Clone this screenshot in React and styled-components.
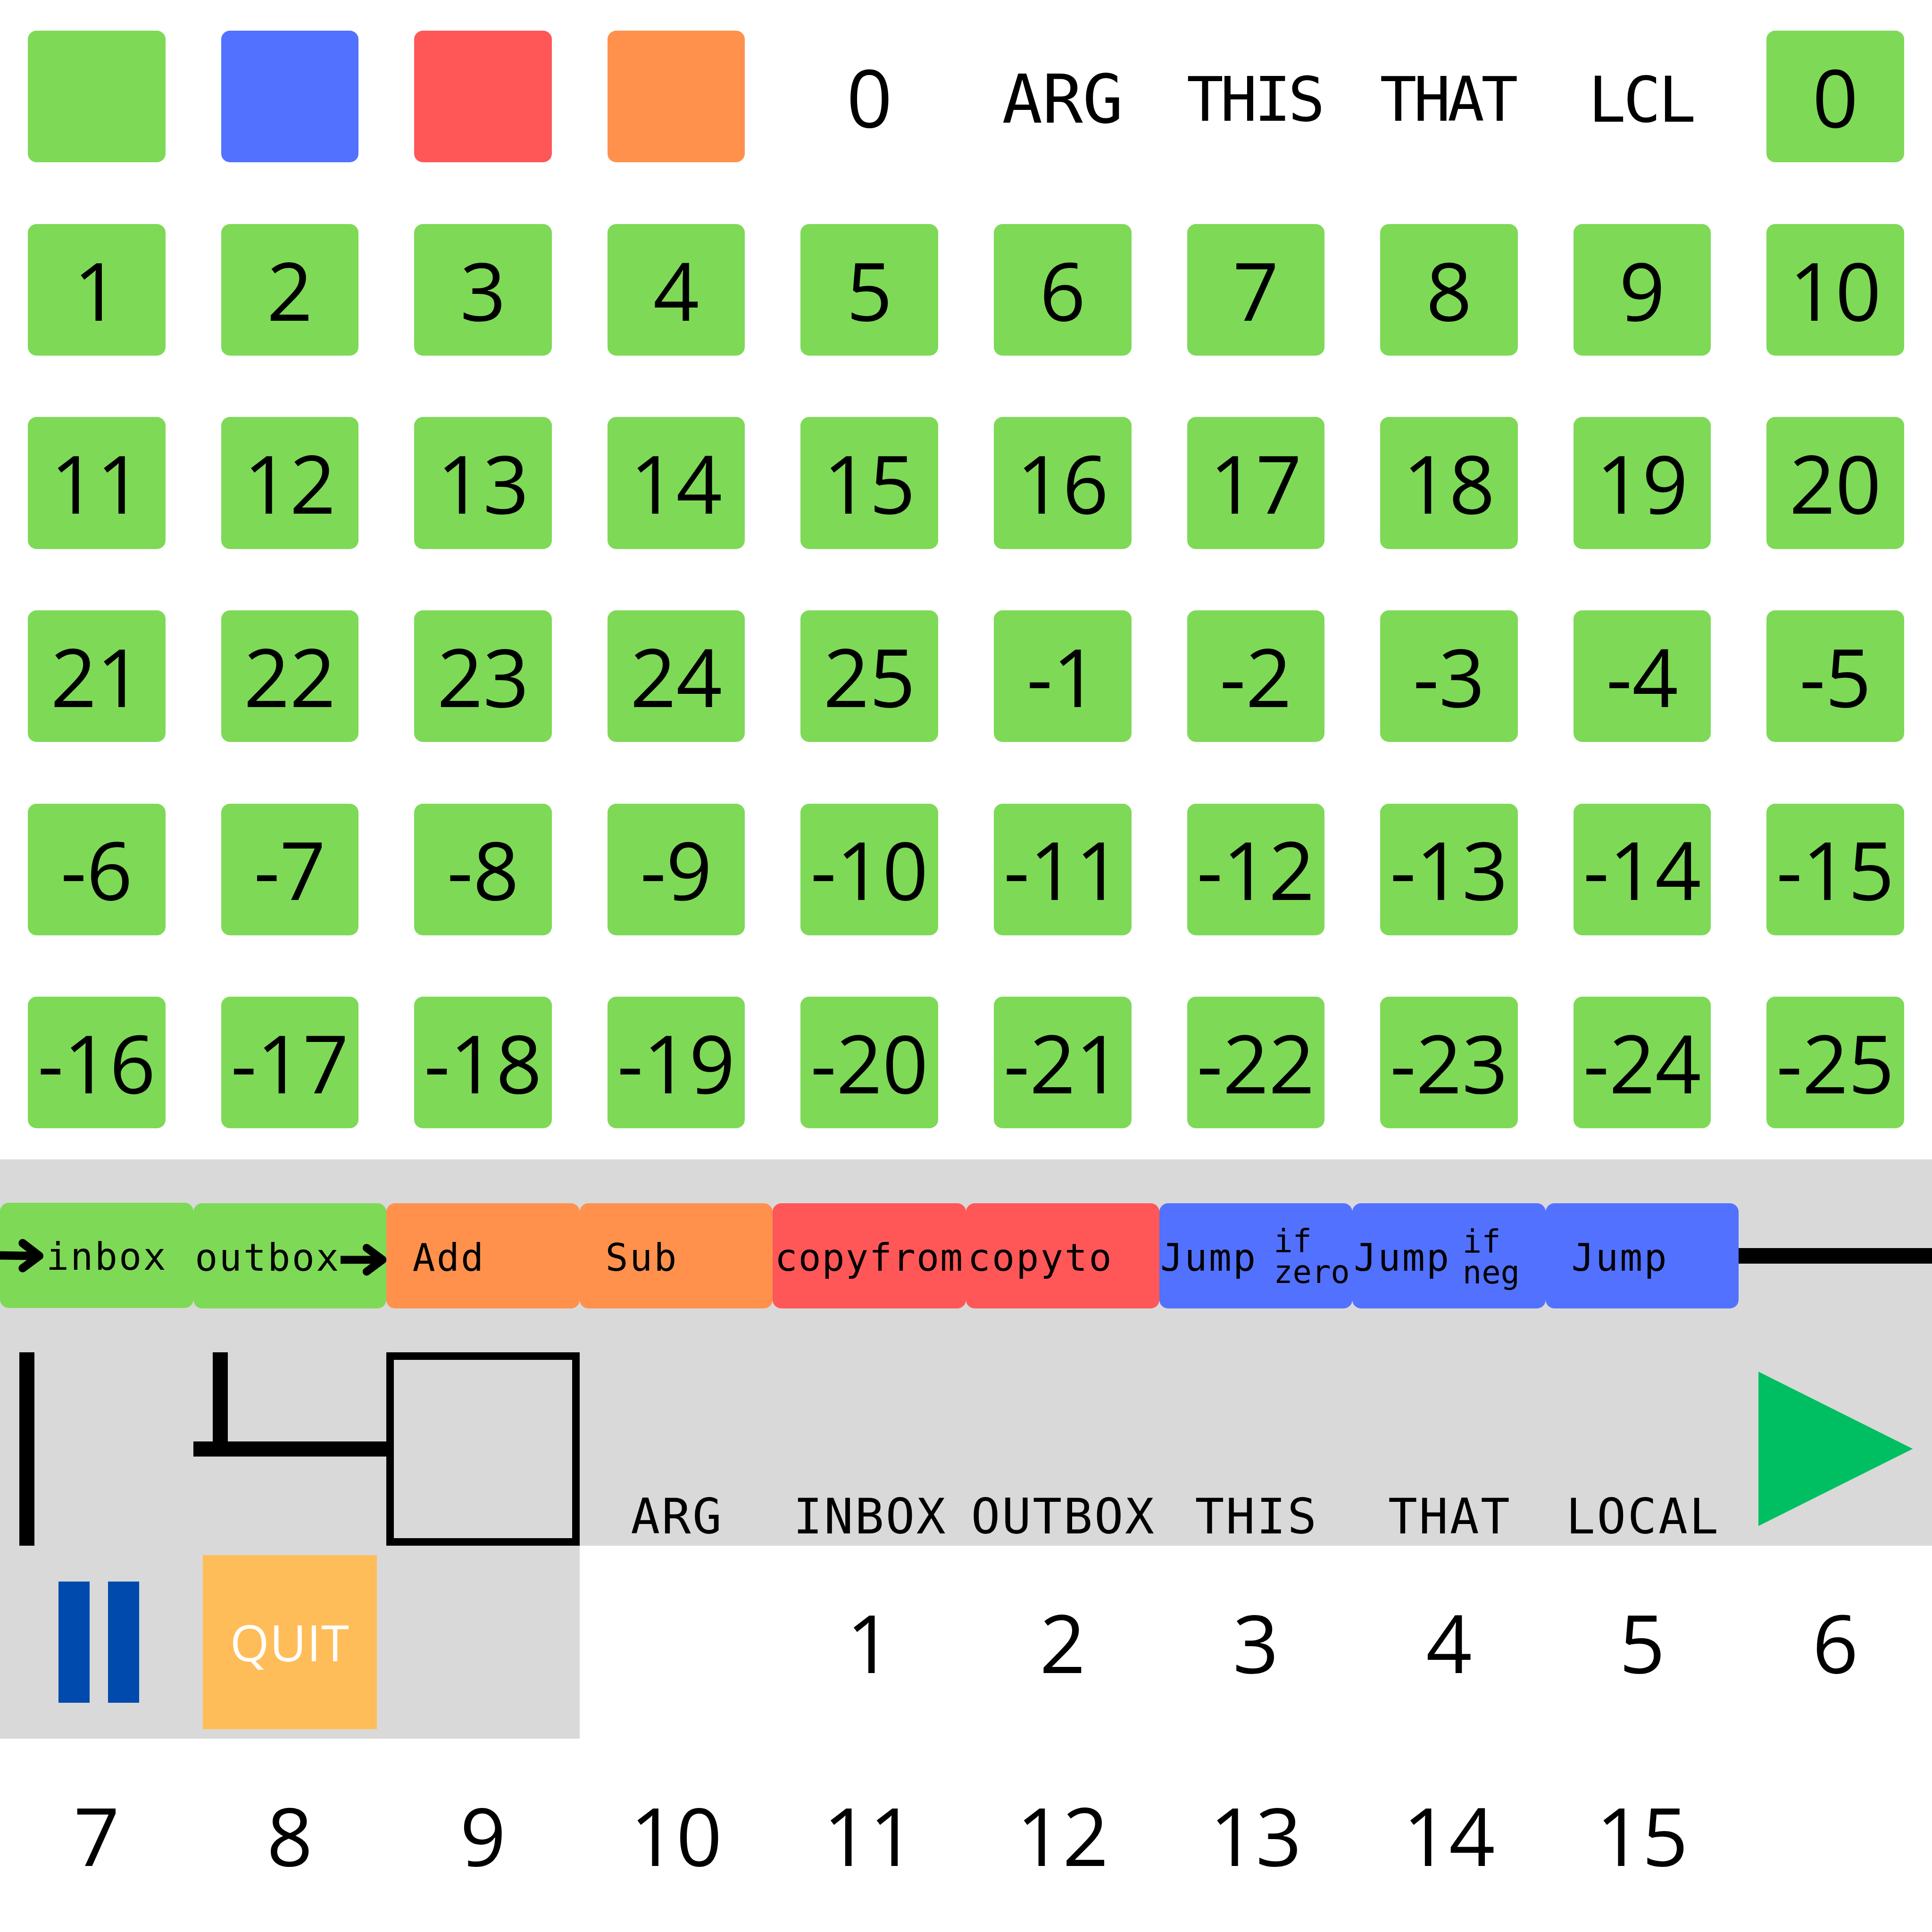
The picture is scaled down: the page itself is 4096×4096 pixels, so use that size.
import React from "react";
import styled, { createGlobalStyle } from "styled-components";

const px = (n) => `${+(n * 0.8).toFixed(3)}px`;

const color = {
  green: "#7ed957",
  blue: "#5271ff",
  red: "#ff5757",
  orange: "#ff914d",
  panel: "#d9d9d9",
  play: "#00bf63",
  pause: "#004aad",
  quit: "#ffbd59",
};

const mono = { family: '"DejaVu Sans Mono", monospace', advance: 0.602, baseline: 0.846 };

const GlobalStyle = createGlobalStyle`
  html, body { margin: 0; background: #fff; }
`;

const Sheet = styled.main`
  display: grid;
  grid-template-columns: repeat(10, ${px(512)});
  grid-auto-rows: ${px(512)};
  width: ${px(5120)};
  height: ${px(5120)};
  overflow: hidden;
  color: #000;
`;

const Cell = styled.div`
  display: flex;
  min-width: 0;
  align-items: ${(p) => (p.$top ? "flex-start" : "center")};
  justify-content: ${(p) => (p.$start ? "flex-start" : "center")};
  background: ${(p) => (p.$panel ? color.panel : "transparent")};
`;

const Tile = styled.div`
  display: flex;
  align-items: center;
  justify-content: center;
  width: ${px(364.4)};
  height: ${px(349)};
  border-radius: ${px(23)};
  background: ${(p) => color[p.$tone]};
`;

const Digits = styled.span`
  font: 400 ${px(213.33)} / ${px(512)} "Open Sans", sans-serif;
  white-space: nowrap;
`;

const Mono = styled.span`
  flex: none;
  font-family: ${mono.family};
  font-size: ${(p) => px(p.$size)};
  line-height: 1;
  letter-spacing: ${(p) => px(p.$advance - p.$size * mono.advance)};
  margin-right: ${(p) => px(p.$size * mono.advance - p.$advance)};
  margin-left: ${(p) => px(p.$left || 0)};
  padding-top: ${(p) => px(p.$baseline - p.$size * mono.baseline)};
  white-space: nowrap;
`;

const Command = styled.div`
  display: flex;
  align-items: flex-start;
  width: ${px(512)};
  height: ${(p) => px(p.$height || 278.3)};
  margin-top: ${(p) => px(p.$y || 116.8)};
  border-radius: ${px(23)};
  background: ${(p) => color[p.$tone]};
`;

const Condition = styled.div`
  display: flex;
  flex: none;
  flex-direction: column;
  margin-left: ${(p) => px(p.$gap)};
  padding-top: ${(p) => px(p.$y)};
`;

const ConditionLine = styled.span`
  height: ${px(82)};
  font-family: ${mono.family};
  font-size: ${px(84)};
  line-height: ${px(82)};
  letter-spacing: ${px(-0.1)};
`;

const Arrow = styled.svg`
  flex: none;
  width: ${(p) => px(p.$width)};
  height: ${px(278)};
  margin-left: ${(p) => px(p.$gap || 0)};
  overflow: visible;
`;

const HLine = styled.div`
  width: 100%;
  height: ${px(40.5)};
  background: #000;
`;

const VLine = styled.div`
  width: ${px(40)};
  height: ${(p) => px(p.$height)};
  margin-left: ${px(51.2)};
  background: #000;
`;

const Joint = styled.div`
  display: flex;
  flex-direction: column;
  width: 100%;
`;

const Frame = styled.div`
  box-sizing: border-box;
  width: 100%;
  height: 100%;
  border: ${px(20)} solid #000;
`;

const Play = styled.svg`
  width: ${px(409)};
  height: ${px(409)};
`;

const Pause = styled.div`
  display: flex;
  gap: ${px(49.2)};
  padding-left: ${px(12)};
`;

const PauseBar = styled.div`
  width: ${px(82.5)};
  height: ${px(322)};
  background: ${color.pause};
`;

const Quit = styled.button`
  width: ${px(460.8)};
  height: ${px(460.8)};
  padding: 0;
  border: 0;
  background: ${color.quit};
  color: #fff;
  font: 400 ${px(133.33)} / 1 "Open Sans", sans-serif;
  letter-spacing: ${px(1.3)};
`;

const heading = [
  { text: "ARG", size: 178.7, advance: 106.8, baseline: 325.7 },
  { text: "THIS", size: 162.5, advance: 89.6, baseline: 320 },
  { text: "THAT", size: 162.5, advance: 89.6, baseline: 320 },
  { text: "LCL", size: 166, advance: 93, baseline: 322.6 },
];

const range = (from, to) =>
  Array.from({ length: Math.abs(to - from) + 1 }, (_, i) => from + (to > from ? i : -i));

const tileValues = [...range(0, 25), ...range(-1, -25)];

const Word = ({ children, left, baseline = 179.2, advance = 64.2 }) => (
  <Mono $size={100} $advance={advance} $left={left} $baseline={baseline}>
    {children}
  </Mono>
);

const CommandCell = ({ children, ...props }) => (
  <Cell $panel $top>
    <Command {...props}>{children}</Command>
  </Cell>
);

const Caption = ({ children }) => (
  <Cell $panel $top>
    <Mono $size={128.5} $advance={81.6} $baseline={481}>
      {children}
    </Mono>
  </Cell>
);

export default function App() {
  return (
    <>
      <GlobalStyle />
      <Sheet>
        {["green", "blue", "red", "orange"].map((tone) => (
          <Cell key={tone}>
            <Tile $tone={tone} />
          </Cell>
        ))}
        <Cell>
          <Digits>0</Digits>
        </Cell>
        {heading.map((h) => (
          <Cell key={h.text} $top>
            <Mono $size={h.size} $advance={h.advance} $baseline={h.baseline}>
              {h.text}
            </Mono>
          </Cell>
        ))}
        {tileValues.map((value) => (
          <Cell key={value}>
            <Tile $tone="green">
              <Digits>{value}</Digits>
            </Tile>
          </Cell>
        ))}

        <CommandCell $tone="green" $y={115} $height={278.7}>
          <Arrow $width={116} viewBox="0 0 116 278" fill="none" stroke="#000" strokeWidth="22">
            <path d="M0 139.5L98 141" />
            <path d="M60 107L104 140.7L60 173.4" strokeLinecap="round" strokeLinejoin="round" />
          </Arrow>
          <Word left={6.5} baseline={179}>inbox</Word>
        </CommandCell>
        <CommandCell $tone="green">
          <Word left={4.5}>outbox</Word>
          <Arrow $width={122} $gap={4.3} viewBox="0 0 122 278" fill="none" stroke="#000" strokeWidth="21">
            <path d="M0 149.8H106" />
            <path d="M69 118.2L111.5 149.8L69 181.4" strokeLinecap="round" strokeLinejoin="round" />
          </Arrow>
        </CommandCell>
        <CommandCell $tone="orange">
          <Word left={69}>Add</Word>
        </CommandCell>
        <CommandCell $tone="orange">
          <Word left={68.5}>Sub</Word>
        </CommandCell>
        <CommandCell $tone="red">
          <Word left={5} advance={62.6}>copyfrom</Word>
        </CommandCell>
        <CommandCell $tone="red">
          <Word left={4.5}>copyto</Word>
        </CommandCell>
        <CommandCell $tone="blue">
          <Word left={3}>Jump</Word>
          <Condition $gap={47.5} $y={61.1}>
            <ConditionLine>if</ConditionLine>
            <ConditionLine>zero</ConditionLine>
          </Condition>
        </CommandCell>
        <CommandCell $tone="blue">
          <Word left={3.5}>Jump</Word>
          <Condition $gap={35.7} $y={62.1}>
            <ConditionLine>if</ConditionLine>
            <ConditionLine>neg</ConditionLine>
          </Condition>
        </CommandCell>
        <CommandCell $tone="blue">
          <Word left={68.3}>Jump</Word>
        </CommandCell>
        <Cell $panel>
          <HLine />
        </Cell>

        <Cell $panel $top $start>
          <VLine $height={512} />
        </Cell>
        <Cell $panel $top $start>
          <Joint>
            <VLine $height={235.8} />
            <HLine />
          </Joint>
        </Cell>
        <Cell $panel>
          <Frame />
        </Cell>
        {["ARG", "INBOX", "OUTBOX", "THIS", "THAT", "LOCAL"].map((name) => (
          <Caption key={name}>{name}</Caption>
        ))}
        <Cell $panel>
          <Play viewBox="0 0 100 100">
            <path d="M0 0L100 50L0 100Z" fill={color.play} />
          </Play>
        </Cell>

        <Cell $panel>
          <Pause>
            <PauseBar />
            <PauseBar />
          </Pause>
        </Cell>
        <Cell $panel>
          <Quit>QUIT</Quit>
        </Cell>
        <Cell $panel />
        <Cell />
        {range(1, 15).map((n) => (
          <Cell key={`n${n}`}>
            <Digits>{n}</Digits>
          </Cell>
        ))}
      </Sheet>
    </>
  );
}
